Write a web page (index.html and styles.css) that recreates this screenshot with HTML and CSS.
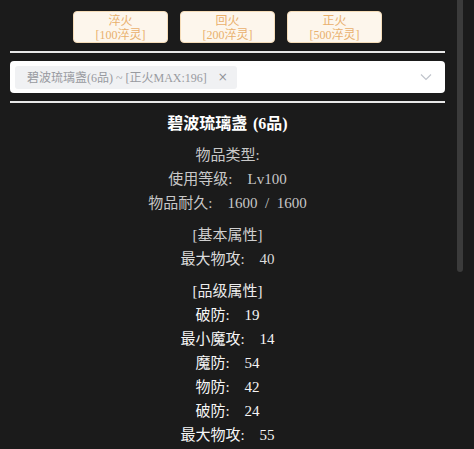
FILE: index.html
```html
<!DOCTYPE html>
<html lang="zh">
<head>
<meta charset="utf-8">
<link rel="stylesheet" href="styles.css">
</head>
<body>
<div class="page">
  <div class="actions">
    <button class="btn">淬火<br>[100淬灵]</button>
    <button class="btn">回火<br>[200淬灵]</button>
    <button class="btn">正火<br>[500淬灵]</button>
  </div>
  <div class="rule"></div>
  <div class="select">
    <span class="tag">碧波琉璃盏(6品) ~ [正火MAX:196]<span class="tag-close">×</span></span>
    <svg class="chevron" width="12" height="8" viewBox="0 0 12 8"><path d="M1 1.5 L6 6.5 L11 1.5" fill="none" stroke="#c0c4cc" stroke-width="1.2"/></svg>
  </div>
  <div class="rule"></div>
  <div class="item">
    <div class="title">碧波琉璃盏 (6品)</div>
    <div class="group meta">
      <div class="row">物品类型:</div>
      <div class="row">使用等级: &nbsp;Lv100</div>
      <div class="row">物品耐久: &nbsp;1600 / 1600</div>
    </div>
    <div class="group">
      <div class="row head">[基本属性]</div>
      <div class="row soft">最大物攻: &nbsp;40</div>
    </div>
    <div class="group">
      <div class="row head bright">[品级属性]</div>
      <div class="row val">破防: &nbsp;19</div>
      <div class="row val">最小魔攻: &nbsp;14</div>
      <div class="row val">魔防: &nbsp;54</div>
      <div class="row val">物防: &nbsp;42</div>
      <div class="row val">破防: &nbsp;24</div>
      <div class="row val">最大物攻: &nbsp;55</div>
    </div>
  </div>
</div>
<div class="scroll-thumb"></div>
</body>
</html>
```
FILE: styles.css
```css
html, body {
  margin: 0;
  padding: 0;
  background: #1b1b1b;
}
body {
  font-family: "Liberation Serif", "Noto Sans CJK SC", serif;
  height: 449px;
  overflow: hidden;
  position: relative;
}
.page {
  box-sizing: border-box;
  width: 457px;
  height: 449px;
  overflow: hidden;
  padding: 11px 12px 0 10px;
}
.scroll-thumb {
  position: absolute;
  left: 457px;
  top: 0;
  width: 6px;
  height: 272px;
  background: #3b3b3b;
  border-radius: 0 0 3px 3px;
}
.actions {
  display: flex;
  justify-content: center;
  gap: 12px;
}
.btn {
  box-sizing: border-box;
  width: 95px;
  height: 32px;
  padding: 1px 0 0;
  background: #fdf6ec;
  border: 1px solid #f5dcb8;
  border-radius: 4px;
  color: #e9b06c;
  font-family: "Liberation Serif", "Noto Sans CJK SC", serif;
  font-size: 12px;
  line-height: 14px;
}
.rule {
  height: 2px;
  background: #e8e8e8;
  margin: 8px 0;
}
.select {
  height: 32px;
  background: #fff;
  border-radius: 4px;
  display: flex;
  align-items: center;
  padding: 0 13px 0 5px;
}
.tag {
  display: inline-flex;
  align-items: center;
  height: 23px;
  padding: 0 9px 0 12px;
  background: #f0f1f3;
  border-radius: 3px;
  color: #989aa0;
  font-size: 12px;
}
.tag-close {
  margin-left: 11px;
  font-family: "DejaVu Sans", sans-serif;
  font-size: 12px;
  color: #909399;
}
.chevron {
  margin-left: auto;
}
.item {
  text-align: center;
  font-size: 15px;
  line-height: 24px;
  word-spacing: 0.25em;
  color: #c8c8c8;
  padding-top: 1px;
}
.title {
  font-size: 16px;
  font-weight: bold;
  color: #fff;
  margin-bottom: 7px;
  word-spacing: 0.1em;
}
.group + .group {
  margin-top: 8px;
}
.head {
  color: #cfcfcf;
}
.head.bright {
  color: #ececec;
}
.soft {
  color: #dcdcdc;
}
.val {
  color: #f6f6f6;
}
```
